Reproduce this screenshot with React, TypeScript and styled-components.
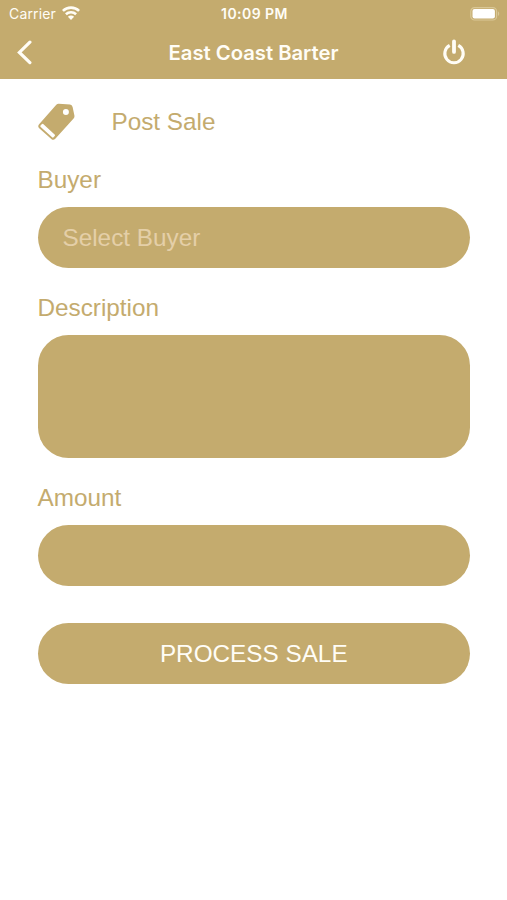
import React from 'react';
import styled, { createGlobalStyle } from 'styled-components';

const gold = '#c4ab6e';

const GlobalStyle = createGlobalStyle`
  *, *::before, *::after { box-sizing: border-box; }
  body { margin: 0; background: #fff; }
`;

const Screen = styled.div`
  width: 507px;
  height: 900px;
  overflow: hidden;
  background: #fff;
  color: ${gold};
  font-family: 'Liberation Sans', Arial, sans-serif;
  font-size: 24.3px;
`;

const Header = styled.header`
  height: 79.3px;
  background: ${gold};
  color: #fffdf6;
  font-family: Inter, sans-serif;
`;

const StatusBar = styled.div`
  height: 27px;
  padding: 0 7px 0 9px;
  display: grid;
  grid-template-columns: 1fr auto 1fr;
  align-items: center;
  font-size: 14px;
  line-height: 27px;
`;

const Carrier = styled.div`
  display: flex;
  align-items: center;
  gap: 6px;
  letter-spacing: 0.15px;
`;

const Time = styled.time`
  font-weight: 600;
  font-size: 14px;
  letter-spacing: 0.45px;
`;

const BatterySlot = styled.div`
  display: flex;
  justify-content: flex-end;
`;

const NavBar = styled.nav`
  height: 52px;
  padding: 0 37px 1px 15px;
  display: grid;
  grid-template-columns: 28px 1fr 28px;
  align-items: center;
`;

const IconButton = styled.button`
  width: 28px;
  height: 30px;
  padding: 0;
  border: 0;
  background: none;
  color: inherit;
  display: flex;
  align-items: center;
`;

const Title = styled.h1`
  margin: 0;
  padding-left: 22px;
  text-align: center;
  font-size: 20.3px;
  font-weight: 600;
  line-height: 26px;
  letter-spacing: -0.03px;
  white-space: nowrap;
`;

const Form = styled.form`
  padding: 24.2px 37px 0 37.5px;
  display: flex;
  flex-direction: column;
`;

const SectionHeading = styled.div`
  height: 38px;
  display: flex;
  align-items: center;
  gap: 36px;
`;

const SectionTitle = styled.h2`
  margin: 0;
  font: inherit;
  line-height: 38px;
`;

const Label = styled.label<{ $top: number }>`
  margin-top: ${(p) => p.$top}px;
  height: 28px;
  line-height: 28px;
`;

const Field = styled.div<{ $height?: number }>`
  margin-top: 13px;
  height: ${(p) => p.$height ?? 61}px;
  padding: 0 25px;
  border-radius: 30.5px;
  background: ${gold};
  color: #e4cfa8;
  line-height: 61px;
`;

const SubmitButton = styled.button`
  margin-top: 37px;
  height: 61px;
  padding: 0;
  border: 0;
  border-radius: 30.5px;
  background: ${gold};
  color: #fffdf6;
  font: inherit;
  line-height: 61px;
`;

const WifiIcon = () => (
  <svg width="18" height="15" viewBox="0 0 18 15" fill="none" stroke="currentColor" strokeWidth="2.6">
    <path d="M.9 4.9C5.4 .5 12.6 .5 17.1 4.9M3.9 8.2c2.9-2.7 7.3-2.7 10.2 0" />
    <path d="M5.9 10.7c1.8-1.5 4.4-1.5 6.2 0L9 13.9z" fill="currentColor" stroke="none" />
  </svg>
);

const BatteryIcon = () => (
  <svg width="30" height="14" viewBox="0 0 30 14">
    <rect x=".8" y=".6" width="25.8" height="12.4" rx="3.8" fill="none" stroke="#d9c796" strokeWidth="1.2" />
    <rect x="2.5" y="2.1" width="22.4" height="9.3" rx="2" fill="#fff" />
    <path d="M28 4.6c1.6.6 1.6 3.8 0 4.4z" fill="#d9c796" />
  </svg>
);

const BackIcon = () => (
  <svg width="18" height="26" viewBox="0 0 18 26" fill="none" stroke="currentColor" strokeWidth="3.2" strokeLinecap="round" strokeLinejoin="miter">
    <path d="M14.9 2.2L4.4 12.4l10.5 10.2" />
  </svg>
);

const PowerIcon = () => (
  <svg width="24" height="28" viewBox="0 0 24 28" fill="none" stroke="currentColor" strokeWidth="3.1">
    <path d="M7.7 6.4a9.2 9.2 0 1 0 8.6 0" />
    <path d="M12 2.5v10.4" strokeWidth="3.8" strokeLinecap="round" />
  </svg>
);

const TagIcon = () => (
  <svg width="38" height="38" viewBox="0 0 38 38" fill={gold}>
    <path
      fillRule="evenodd"
      d="M20.8.7 32 1.6q2 .2 2.6 2.3l1.8 8.6q.3 1.6-.8 2.9L17.3 35.8q-2 2-4 .1L1.2 25.3q-1.9-1.9-.1-4L18.3 1.8Q19.4.6 20.8.7ZM27.9 5.9a3 3 0 1 0 0 6 3 3 0 0 0 0-6ZM5.2 21.1q-.8-.7-1.5.1l-1.1 1.2q-.7.8.1 1.5l11.4 10.4q.8.7 1.5-.1l1.1-1.3q.7-.8-.1-1.5Z"
    />
  </svg>
);

export default function App() {
  return (
    <>
      <GlobalStyle />
      <Screen>
        <Header>
          <StatusBar>
            <Carrier>Carrier <WifiIcon /></Carrier>
            <Time>10:09 PM</Time>
            <BatterySlot><BatteryIcon /></BatterySlot>
          </StatusBar>
          <NavBar>
            <IconButton aria-label="Back"><BackIcon /></IconButton>
            <Title>East Coast Barter</Title>
            <IconButton aria-label="Log out"><PowerIcon /></IconButton>
          </NavBar>
        </Header>
        <Form>
          <SectionHeading>
            <TagIcon />
            <SectionTitle>Post Sale</SectionTitle>
          </SectionHeading>
          <Label $top={24.9}>Buyer</Label>
          <Field>Select Buyer</Field>
          <Label $top={26.1}>Description</Label>
          <Field $height={122.5} />
          <Label $top={26}>Amount</Label>
          <Field />
          <SubmitButton type="button">PROCESS SALE</SubmitButton>
        </Form>
      </Screen>
    </>
  );
}
